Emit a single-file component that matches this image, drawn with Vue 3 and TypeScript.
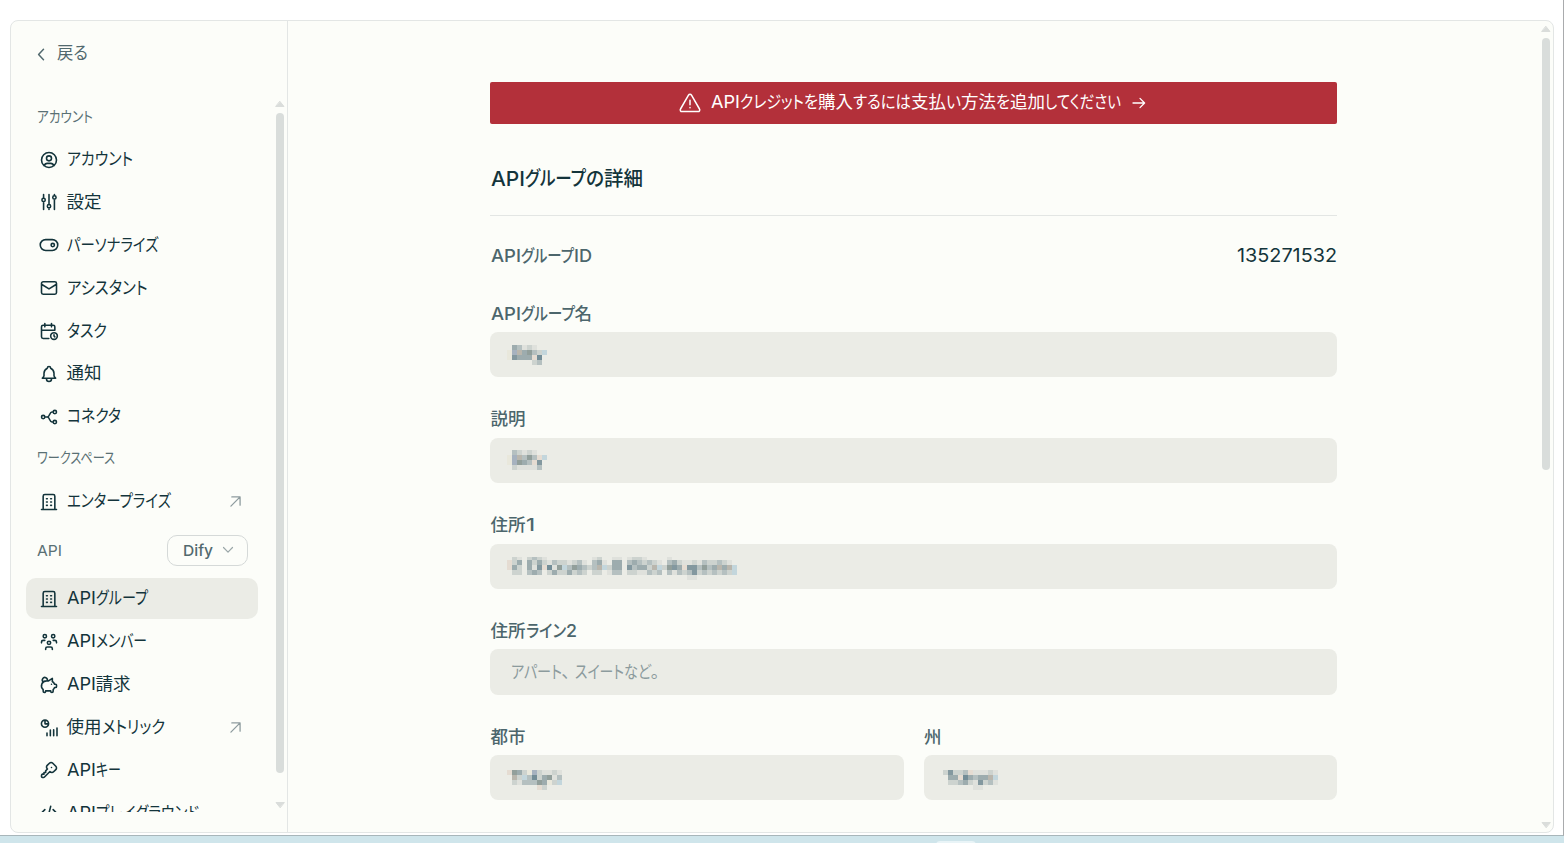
<script setup lang="ts">
import type { ObjectDirective } from 'vue'

/** A run of text and the width it is set to, in pixels. */
type Run = [text: string, width: number]

interface NavItem {
  icon: string
  label: Run[]
  external?: boolean
  active?: boolean
}

interface Mosaic {
  left: number
  top: number
  /** Pixels hidden from the first row of cells. */
  crop?: number
  rows: string[]
}

interface Field {
  label: Run[]
  mosaic?: Mosaic
  placeholder?: Run[]
}

/** Condenses a run of glyphs to the requested advance width; punctuation keeps its shape. */
const vFit: ObjectDirective<HTMLElement, number> = {
  mounted(el, { value }) {
    const natural = el.getBoundingClientRect().width
    if (!natural) return
    if (value / natural < 1.35) el.style.transform = `scaleX(${value / natural})`
    el.style.marginRight = `${value - natural}px`
  },
}

const icons: Record<string, string> = {
  user: 'M3 12a9 9 0 1 0 18 0a9 9 0 1 0-18 0M9 10a3 3 0 1 0 6 0a3 3 0 1 0-6 0M6.2 18.8a4 4 0 0 1 3.8-2.8h4a4 4 0 0 1 3.8 2.8',
  sliders: 'M3.500 9.500a2 2 0 1 0 4 0a2 2 0 0 0-4 0M5.500 3v4.500M5.500 11.500v9.500M10 17a2 2 0 1 0 4 0a2 2 0 0 0-4 0M12 3v12M12 19v2M16.500 6.500a2 2 0 1 0 4 0a2 2 0 0 0-4 0M18.500 3v1.500M18.500 8.500v12.500',
  toggle: 'M8 5.500h8a6.500 6.500 0 0 1 0 13h-8a6.500 6.500 0 0 1 0-13zM14.500 12a2 2 0 1 0 4 0a2 2 0 1 0-4 0',
  mail: 'M5 4.500h14a2 2 0 0 1 2 2v11a2 2 0 0 1-2 2h-14a2 2 0 0 1-2-2v-11a2 2 0 0 1 2-2M3 7.500l9 5.500l9-5.500',
  task: 'M11.8 21h-6.8a2 2 0 0 1-2-2v-12a2 2 0 0 1 2-2h12a2 2 0 0 1 2 2v4M14 18a4 4 0 1 0 8 0a4 4 0 1 0-8 0M15 3v4M7 3v4M3 11h16M18 16.5v1.5l1 1',
  bell: 'M10 5a2 2 0 1 1 4 0a7 7 0 0 1 4 6v3a4 4 0 0 0 2 3h-16a4 4 0 0 0 2-3v-3a7 7 0 0 1 4-6M9 17v1a3 3 0 0 0 6 0v-1',
  connector: 'M3 12a2 2 0 1 0 4 0a2 2 0 1 0-4 0M17 6a2 2 0 1 0 4 0a2 2 0 1 0-4 0M17 18a2 2 0 1 0 4 0a2 2 0 1 0-4 0M7 12h3M17 6h-1.5c-3 0-2.500 6-5.500 6c3 0 2.500 6 5.500 6h1.500',
  building: 'M3 21h18M9 8h1M9 12h1M9 16h1M14 8h1M14 12h1M14 16h1M5 21v-16a2 2 0 0 1 2-2h10a2 2 0 0 1 2 2v16',
  members: 'M10 13a2 2 0 1 0 4 0a2 2 0 0 0-4 0M8 21v-1a2 2 0 0 1 2-2h4a2 2 0 0 1 2 2v1M15 5a2 2 0 1 0 4 0a2 2 0 0 0-4 0M17 10h2a2 2 0 0 1 2 2v1M5 5a2 2 0 1 0 4 0a2 2 0 0 0-4 0M3 13v-1a2 2 0 0 1 2-2h2',
  pig: 'M15 11v.01M5.173 8.378a3 3 0 1 1 4.656-1.377M16 4v3.803a6.019 6.019 0 0 1 2.658 3.197h1.341a1 1 0 0 1 1 1v2a1 1 0 0 1-1 1h-1.342c-.336.95-.907 1.8-1.658 2.473v2.027a1.5 1.5 0 0 1-3 0v-.583a6.04 6.04 0 0 1-1 .083h-4a6.04 6.04 0 0 1-1-.083v.583a1.5 1.5 0 0 1-3 0v-2.027a6 6 0 0 1 4-10.473h2.500z',
  metrics: 'M2.900 6.800a4.300 4.300 0 1 0 8.600 0a4.300 4.300 0 1 0-8.600 0M7.200 4v3h3M9.600 18v3.200M13.600 14.500v6.700M17.600 14v7.200M21.600 12v9.200',
  key: 'M16.555 3.843l3.602 3.602a2.877 2.877 0 0 1 0 4.069l-2.643 2.643a2.877 2.877 0 0 1-4.069 0l-.301-.301l-6.558 6.558a2 2 0 0 1-1.239.578l-.175.008h-1.172a1 1 0 0 1-.993-.883l-.007-.117v-1.172a2 2 0 0 1 .467-1.284l.119-.13l.414-.414h2v-2h2v-2l2.144-2.144l-.301-.301a2.877 2.877 0 0 1 0-4.069l2.643-2.643a2.877 2.877 0 0 1 4.069 0zM15 9h.01',
  code: 'M7 8l-4 4l4 4M17 8l4 4l-4 4M14 4l-4 16',
}

const accountItems: NavItem[] = [
  { icon: 'user', label: [['アカウント', 66]] },
  { icon: 'sliders', label: [['設定', 35]] },
  { icon: 'toggle', label: [['パーソナライズ', 91.5]] },
  { icon: 'mail', label: [['アシスタント', 80.5]] },
  { icon: 'task', label: [['タスク', 40]] },
  { icon: 'bell', label: [['通知', 35]] },
  { icon: 'connector', label: [['コネクタ', 54]] },
]

const workspaceItems: NavItem[] = [
  { icon: 'building', label: [['エンタープライズ', 104]], external: true },
]

const apiItems: NavItem[] = [
  { icon: 'building', label: [['API', 29], ['グループ', 52]], active: true },
  { icon: 'members', label: [['API', 29], ['メンバー', 51]] },
  { icon: 'pig', label: [['API', 29], ['請求', 35]] },
  { icon: 'metrics', label: [['使用', 35], ['メトリック', 63]], external: true },
  { icon: 'key', label: [['API', 29], ['キー', 25]] },
  { icon: 'code', label: [['API', 29], ['プレイグラウンド', 103]] },
]

const navGroups = [
  { kind: 'account', title: [['アカウント', 56]] as Run[], items: accountItems, picker: false },
  { kind: 'workspace', title: [['ワークスペース', 78]] as Run[], items: workspaceItems, picker: false },
  { kind: 'api', title: [['API', 25]] as Run[], items: apiItems, picker: true },
]

const bannerText: Run[] = [
  ['API', 29], ['クレジット', 64], ['を', 14], ['購入', 35], ['するには', 58],
  ['支払', 35], ['い', 15], ['方法', 35], ['を', 14], ['追加', 35], ['してください', 76],
]

const headingText: Run[] = [['API', 34], ['グループ', 61], ['の', 18], ['詳細', 39]]
const idLabel: Run[] = [['API', 30], ['グループ', 53], ['ID', 18]]

const palette: Record<string, string> = {
  a: '#dfe1dc', b: '#cdd3cf', c: '#b5c0c0', d: '#9dacae', e: '#83989f', f: '#738d97',
  w: '#e5dcd2', t: '#b9b6ad', g: '#c3d6dc', v: '#a6b2bf', k: '#929f9b', y: '#e9e8dc',
}

const CELL = 5

function cells(m: Mosaic) {
  return m.rows.flatMap((row, y) =>
    [...row].flatMap((ch, x) =>
      palette[ch]
        ? [{ key: `${x}-${y}`, x: x * CELL, y: y * CELL - (m.crop ?? 0), fill: palette[ch] }]
        : [],
    ),
  )
}

const fields: Field[] = [
  {
    label: [['API', 30], ['グループ', 54], ['名', 17.5]],
    mosaic: { left: 17, top: 13, rows: ['.dcaba', 'yvtdkcbg', 'yedddwf', '.....bc'] },
  },
  {
    label: [['説明', 35]],
    mosaic: { left: 17, top: 12, rows: ['.cbaba', 'yvtckcwg', 'yvkdcwe', '.baaaac'] },
  },
  {
    label: [['住所', 35], ['1', 9]],
    mosaic: {
      left: 17,
      top: 13,
      crop: 2,
      rows: [
        '.ba.bcba.........ab..aa.abba....a',
        'wbd.dbdbacbbabca.cda.dd.cdcbcba.cdbaabacbbcba',
        'wdb.daewfakgckdcbctgbdd.ecddbtgbkedweeckcdtdtg',
        '.bb.cdc.bdbbdbcb.bb.acc.bbaacbc.cacbcebcbcbcbg',
        '....................................aa',
      ],
    },
  },
  {
    label: [['住所', 35], ['ライン', 40], ['2', 11]],
    placeholder: [['アパート', 51], ['、', 13], ['スイート', 49], ['など', 27], ['。', 14]],
  },
]

const regionFields: Field[] = [
  {
    label: [['都市', 35]],
    mosaic: { left: 17, top: 15, rows: ['wkdbyvbaaba', '.tbgcfbdkac', '.baccckdybg', '......wb'] },
  },
  {
    label: [['州', 17.5]],
    mosaic: { left: 19, top: 15, rows: ['bebbcwaaaba', '.ddwfdcddtg', '.bbcdbaebca', '......aa'] },
  },
]
</script>

<template>
  <div class="screen">
    <div class="window">
      <div class="frame">
        <aside class="sidebar">
          <a class="back">
            <svg class="back-icon" viewBox="0 0 8 13"><path d="M6.500 1.300L1.600 6.500l4.900 5.200" /></svg>
            <span v-fit="31" class="run">戻る</span>
          </a>
          <div class="nav-area">
            <nav class="nav">
              <section v-for="(group, g) in navGroups" :key="g" class="group">
                <div class="group-title" :class="group.kind">
                  <span class="line">
                    <span v-for="(r, i) in group.title" :key="i" v-fit="r[1]" class="run">{{ r[0] }}</span>
                  </span>
                  <button v-if="group.picker" class="picker">
                    <span v-fit="30" class="run">Dify</span>
                    <svg class="chevron" viewBox="0 0 12 8"><path d="M1.500 1.500L6 6.200l4.500-4.700" /></svg>
                  </button>
                </div>
                <a v-for="(item, n) in group.items" :key="n" class="item" :class="{ active: item.active }">
                  <svg class="icon" viewBox="0 0 24 24"><path :d="icons[item.icon]" /></svg>
                  <span class="line">
                    <span v-for="(r, i) in item.label" :key="i" v-fit="r[1]" class="run">{{ r[0] }}</span>
                  </span>
                  <svg v-if="item.external" class="external" viewBox="0 0 12 12"><path d="M1 11L11 1M2 1h9v9" /></svg>
                </a>
              </section>
            </nav>
            <div class="scrollbar nav-scroll">
              <svg class="arrow" viewBox="0 0 10 7"><path d="M5 1L9 6H1z" /></svg>
              <div class="track"><div class="thumb nav-thumb"></div></div>
              <svg class="arrow" viewBox="0 0 10 7"><path d="M5 6L1 1h8z" /></svg>
            </div>
          </div>
        </aside>

        <main class="main">
          <div class="content">
            <div class="banner">
              <svg class="warning" viewBox="0 0 22 20">
                <path d="M9.500 2.200L1.500 16a1.700 1.700 0 0 0 1.500 2.600h16a1.700 1.700 0 0 0 1.500-2.600L12.500 2.200a1.750 1.750 0 0 0-3 0zM11 7.200v4.500M11 14.600v.1" />
              </svg>
              <span class="line">
                <span v-for="(r, i) in bannerText" :key="i" v-fit="r[1]" class="run">{{ r[0] }}</span>
              </span>
              <svg class="forward" viewBox="0 0 14 12"><path d="M1 6h11.500M8 1.400L12.600 6L8 10.600" /></svg>
            </div>

            <h1 class="heading line">
              <span v-for="(r, i) in headingText" :key="i" v-fit="r[1]" class="run">{{ r[0] }}</span>
            </h1>

            <div class="id-row">
              <span class="label line">
                <span v-for="(r, i) in idLabel" :key="i" v-fit="r[1]" class="run">{{ r[0] }}</span>
              </span>
              <span v-fit="100" class="run id-value">135271532</span>
            </div>

            <div class="form">
              <div v-for="(f, n) in fields" :key="n" class="field">
                <div class="label line">
                  <span v-for="(r, i) in f.label" :key="i" v-fit="r[1]" class="run">{{ r[0] }}</span>
                </div>
                <div class="input">
                  <span v-if="f.placeholder" class="placeholder line">
                    <span v-for="(r, i) in f.placeholder" :key="i" v-fit="r[1]" class="run">{{ r[0] }}</span>
                  </span>
                  <svg v-if="f.mosaic" class="mosaic" :style="{ left: f.mosaic.left + 'px', top: f.mosaic.top + 'px' }">
                    <rect v-for="c in cells(f.mosaic)" :key="c.key" :x="c.x" :y="c.y" width="5" height="5" :fill="c.fill" />
                  </svg>
                </div>
              </div>
              <div class="columns">
                <div v-for="(f, n) in regionFields" :key="n" class="field">
                  <div class="label line">
                    <span v-for="(r, i) in f.label" :key="i" v-fit="r[1]" class="run">{{ r[0] }}</span>
                  </div>
                  <div class="input">
                    <svg v-if="f.mosaic" class="mosaic" :style="{ left: f.mosaic.left + 'px', top: f.mosaic.top + 'px' }">
                      <rect v-for="c in cells(f.mosaic)" :key="c.key" :x="c.x" :y="c.y" width="5" height="5" :fill="c.fill" />
                    </svg>
                  </div>
                </div>
              </div>
            </div>
          </div>

          <div class="scrollbar main-scroll">
            <svg class="arrow" viewBox="0 0 10 7"><path d="M5 1L9 6H1z" /></svg>
            <div class="track"><div class="thumb main-thumb"></div></div>
            <svg class="arrow" viewBox="0 0 10 7"><path d="M5 6L1 1h8z" /></svg>
          </div>
        </main>
      </div>
    </div>
    <div class="desktop"><div class="desktop-tab"></div></div>
  </div>
</template>

<style>
body {
  margin: 0;
  overflow: hidden;
}
</style>

<style scoped>
.screen {
  width: 1564px;
  height: 843px;
  box-sizing: border-box;
  overflow: hidden;
  display: flex;
  flex-direction: column;
  background: #fff;
  color: #13343b;
  font-family: Inter, 'Noto Sans CJK JP', sans-serif;
  font-size: 17.5px;
  font-feature-settings: 'palt';
}
.window {
  height: 836px;
  box-sizing: border-box;
  flex: none;
  padding: 20px 9px 3px 10px;
  border-right: 1px solid #a9abad;
  border-bottom: 1px solid #a8b6ba;
}
.frame {
  height: 812.5px;
  box-sizing: border-box;
  display: flex;
  border: 1px solid #e3e6e5;
  border-radius: 8px;
  background: #fcfdf9;
  overflow: hidden;
}
.line {
  display: flex;
  white-space: nowrap;
}
.run {
  display: inline-block;
  flex: none;
  white-space: nowrap;
  transform-origin: 0 50%;
}
svg {
  flex: none;
  fill: none;
  stroke: currentColor;
  stroke-linecap: round;
  stroke-linejoin: round;
}

.sidebar {
  width: 277px;
  box-sizing: border-box;
  flex: none;
  border-right: 1px solid #e3e6e5;
}
.back {
  height: 76px;
  box-sizing: border-box;
  padding: 18.5px 0 0 26px;
  display: flex;
  align-items: flex-start;
  gap: 12px;
  line-height: 26px;
  color: #52696e;
}
.back-icon {
  width: 8px;
  height: 13px;
  margin-top: 8px;
  stroke-width: 1.500;
}
.nav-area {
  height: 714.5px;
  display: flex;
}
.nav {
  width: 247px;
  box-sizing: border-box;
  height: 100%;
  padding-left: 15px;
  overflow: hidden;
}
.group-title {
  box-sizing: border-box;
  padding-left: 10.5px;
  display: flex;
  align-items: center;
  justify-content: space-between;
  font-size: 15px;
  color: #5a7074;
}
.group-title.account {
  height: 42px;
  padding-bottom: 6px;
}
.group-title.workspace {
  height: 44px;
  padding-bottom: 5px;
}
.group-title.api {
  height: 56px;
  padding-right: 10px;
}
.picker {
  width: 81px;
  height: 31px;
  box-sizing: border-box;
  padding: 0 13px 0 15px;
  display: flex;
  align-items: center;
  justify-content: space-between;
  border: 1px solid #d5d9d8;
  border-radius: 10px;
  background: #fcfdf9;
  font: inherit;
  font-weight: 500;
  color: #52696e;
}
.chevron {
  width: 12px;
  height: 8px;
  color: #9aa6a8;
  stroke-width: 1.200;
}
.item {
  width: 232px;
  height: 41px;
  box-sizing: border-box;
  margin-bottom: 1.9px;
  padding: 0 17px 0 12.5px;
  display: flex;
  align-items: center;
  gap: 8px;
  border-radius: 10px;
}
.item:last-child {
  margin-bottom: 0;
}
.item .line {
  line-height: 26px;
  position: relative;
  top: -0.500px;
}
.item.active {
  background: #ebece6;
}
.icon {
  width: 20px;
  height: 20px;
  stroke-width: 1.900;
}
.external {
  width: 11px;
  height: 11px;
  margin-left: auto;
  color: #8d9b9e;
  stroke-width: 1.400;
}

.scrollbar {
  width: 10px;
  display: flex;
  flex-direction: column;
  align-items: center;
}
.arrow {
  width: 10px;
  height: 8px;
  fill: #dadddb;
  stroke: #dadddb;
}
.track {
  flex: 1;
  padding-top: 5px;
}
.thumb {
  width: 8px;
  border-radius: 4px;
  background: #d9dddb;
}
.nav-scroll {
  margin-left: 17px;
  padding: 3px 0;
}
.nav-thumb {
  height: 660px;
}

.main {
  flex: 1;
  display: flex;
  justify-content: space-between;
}
.content {
  width: 847px;
  margin-left: 202px;
  padding-top: 61px;
}
.main-scroll {
  margin-right: 2px;
  padding: 4px 0 3px;
}
.main-thumb {
  height: 432px;
}
.banner {
  height: 42px;
  box-sizing: border-box;
  padding-right: 2px;
  display: flex;
  align-items: center;
  justify-content: center;
  border-radius: 2px;
  background: #b3303a;
  color: #fff;
}
.banner .line {
  margin: 0 11px 0 10px;
  line-height: 26px;
  position: relative;
  top: -1.500px;
}
.warning {
  width: 22px;
  height: 20px;
  stroke-width: 1.500;
}
.forward {
  width: 14px;
  height: 12px;
  stroke-width: 1.300;
}
.heading {
  height: 92px;
  box-sizing: border-box;
  margin: 0;
  padding: 40px 0 0 0.500px;
  border-bottom: 1px solid #e3e6e4;
  font-size: 20px;
  line-height: 30px;
  font-weight: 550;
}
.id-row {
  height: 78px;
  display: flex;
  align-items: center;
  justify-content: space-between;
}
.label {
  padding-left: 0.500px;
  line-height: 24px;
  font-weight: 500;
  color: #4c666c;
}
.id-row .label {
  padding-top: 1px;
}
.id-value {
  font-size: 19px;
}
.form {
  margin-top: 7px;
}
.field {
  margin-bottom: 29.5px;
}
.field .label {
  height: 24px;
  box-sizing: border-box;
  padding-top: 0.500px;
  margin-bottom: 7px;
}
.input {
  position: relative;
  height: 45.25px;
  display: flex;
  align-items: center;
  border-radius: 8px;
  background: #ebece6;
}
.placeholder {
  margin: 0 0 2px 20.5px;
  color: #8c9b9d;
}
.mosaic {
  position: absolute;
  width: 240px;
  height: 28px;
  stroke: none;
  shape-rendering: crispEdges;
}
.columns {
  display: grid;
  grid-template-columns: 1fr 1fr;
  gap: 20px;
}

.desktop {
  flex: 1;
  background: #cfe5eb;
}
.desktop-tab {
  width: 40px;
  height: 4px;
  margin: 5px 0 0 936px;
  border-radius: 4px 4px 0 0;
  background: #e9f4f7;
}
</style>
